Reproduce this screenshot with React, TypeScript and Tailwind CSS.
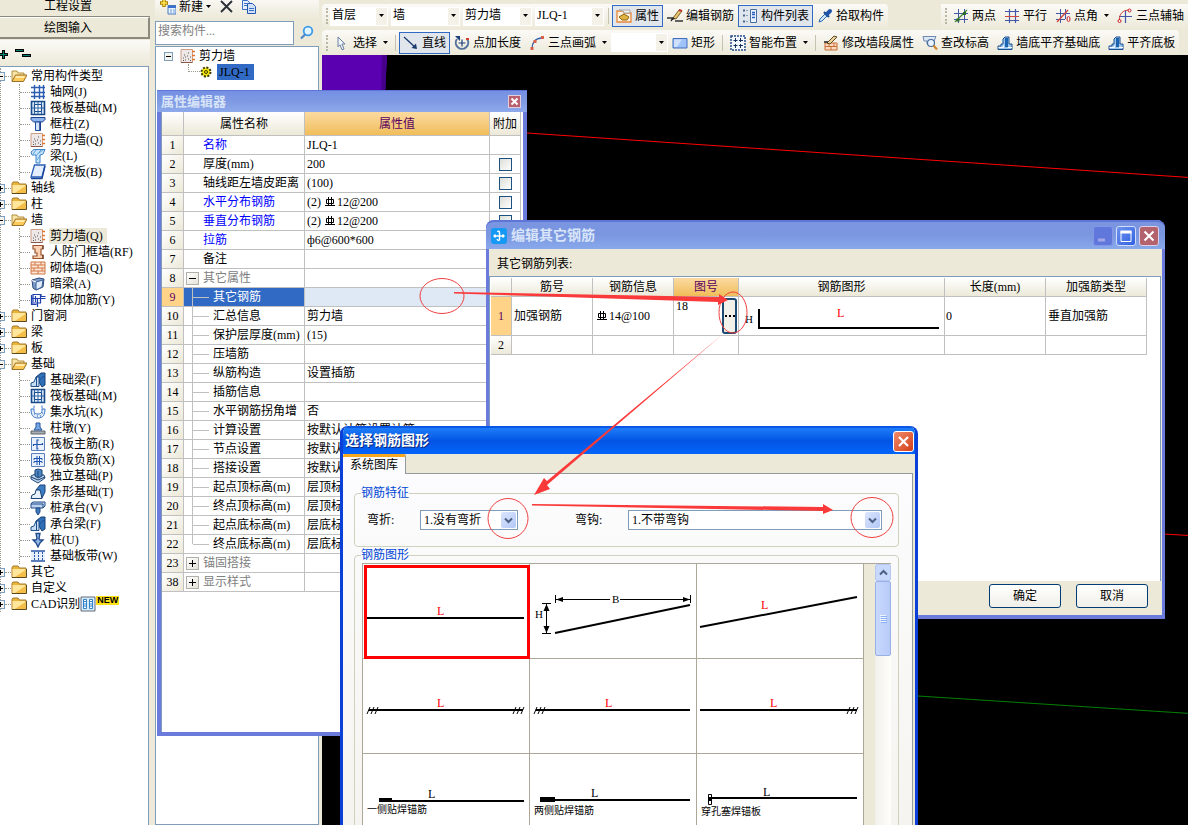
import type { ReactNode } from 'react';

/* ---------- icons ---------- */

const art: Record<string, ReactNode> = {
  folder: (
    <>
      <path d="M1 3.500 2 2h5l1.500 2H15v9.500H1z" fill="#e8b53c" stroke="#a8792a" />
      <path d="M1.500 5H14.500v8h-13z" fill="#ffe69a" />
      <path d="M4 13 14.500 6v7z" fill="#f4bd45" />
      <path d="M1 13.500h14.500V5" fill="none" stroke="#5c4a20" />
    </>
  ),
  folderOpen: (
    <>
      <path d="M1 13V3h5l1 2h6v3" fill="#f7e4a4" stroke="#b38f3f" />
      <path d="M1 13.500 4.500 7H16l-3.500 6.500z" fill="#fbc95a" stroke="#9c722a" />
      <path d="M5 8h9l-1 2H4z" fill="#ffe9a8" />
    </>
  ),
  axis: <path d="M4.500 1v14M9.500 1v14M13.500 1v14M1 3.500h14M1 8.500h14M1 12.500h14" stroke="#2c5cb0" strokeWidth="1.4" />,
  raft: (
    <>
      <path d="M1.500 1.500h13v13h-13z" fill="#dce9fa" stroke="#174a86" strokeWidth="1.600" />
      <path d="M4.500 4.500h7v7h-7z" fill="#fff" stroke="#174a86" strokeWidth="1.200" />
      <path d="M8 2v12M2 8h12M4.500 2v3M11.500 2v3M4.500 11v3M11.500 11v3" stroke="#2a64a8" />
    </>
  ),
  column: (
    <>
      <path d="M1 1.500h14v2L12.500 6h-9L1 3.500z" fill="#8db6ee" stroke="#1a3f8c" />
      <path d="M5.500 6h5v8.500h-5z" fill="#d4e4fb" stroke="#1d4ea3" />
      <path d="M10 6v8.500" stroke="#17398a" strokeWidth="1.500" />
    </>
  ),
  wall: (
    <>
      <path d="M1 1.500h11.500v13H1z" fill="#eee9e6" stroke="#cf9c86" />
      <path d="M1 14.500h11.500" stroke="#8a5a48" />
      <path d="M3 10h1M5 12h1M8 11h1M10 9h1M4 7h1M7 8h1M10 12.500h1M3 12.500h1M8 5h1M5 9h1" stroke="#555" />
      <path d="M12 3.500h3M12 7.500h3M12 11.500h3" stroke="#e2762a" strokeWidth="1.500" />
    </>
  ),
  beam: (
    <>
      <path d="M1 4 4 1.500h11L13 6l-3 1v8H6V7L2 7z" fill="#c9e4fa" stroke="#3a83c8" />
      <path d="m3 6 3-4M6 8l5-6M7 12l4-6M9 5l4-3" stroke="#5ba2dd" />
    </>
  ),
  slab: (
    <>
      <path d="M4.500 1H15l-3 12H1z" fill="#e4eefc" stroke="#2c5fb8" strokeWidth="1.300" />
      <path d="M1 14.500h11L15 2" fill="none" stroke="#17439b" strokeWidth="1.400" />
    </>
  ),
  frameWall: (
    <>
      <path d="M3 1.500h10V5h-2v6h2v3.500H3V12h4V9H5V5H3z" fill="#fbd3b4" stroke="#9a5431" strokeWidth="1.200" />
      <path d="M13 2v3M13 11v4" stroke="#4b2b1c" />
    </>
  ),
  brick: (
    <>
      <path d="M1 2h14v12H1z" fill="#fce6d6" stroke="#d07744" />
      <path d="M1 5h14M1 8h14M1 11h14M5 2v3M11 2v3M8 5v3M4 8v3M12 8v3M8 11v3" stroke="#d07744" />
    </>
  ),
  hidden: (
    <>
      <path d="M2 4 9 2l5 1-1 8-7 3-3-2z" fill="#7d9cc9" stroke="#2d4a7c" />
      <path d="m6 6 7-2-1 7-6 3z" fill="#dfeafa" stroke="#3b5e97" />
      <path d="M2 4.500 6 6" stroke="#fff" />
    </>
  ),
  tie: (
    <path d="M1.500 3v9.500h5M3 12V2.500h8v2h4.500M7.500 15V6.500h8M1 6.500h11M10.500 2v9H4M5.500 4v6" fill="none" stroke="#1f3fae" strokeWidth="1.200" />
  ),
  foundBeam: (
    <>
      <path d="M6 5 11 1h4v12l-3 2z" fill="#2f6fb7" stroke="#173f73" />
      <path d="M1 14.500V11l3-1 2-5h3v9.500z" fill="#c7ddf3" stroke="#1f4f8a" />
      <path d="M6.500 5v9M9 9l5-5" stroke="#1f4f8a" />
    </>
  ),
  pit: (
    <>
      <path d="M1 5h3c0 4 1 5 4 5s4-1 4-5h3c0 6-2 9-7 9S1 11 1 5z" fill="#e1ecfb" stroke="#3a76c6" />
      <path d="M4 1.500v3M12 1.500v3" stroke="#3a76c6" />
      <path d="M4 10h1M7 12h1M10 12h1M12 9h1" stroke="#2458a8" />
    </>
  ),
  pier: (
    <>
      <path d="M1 11h14v3H1z" fill="#a9adb5" stroke="#5d6269" />
      <path d="m4 10 2-3V3h4v4l2 3z" fill="#76a5e4" stroke="#27569f" />
    </>
  ),
  mainBar: (
    <>
      <path d="M1.500 1.500h13v13h-13z" fill="#e9f1fd" stroke="#5a80bb" />
      <path d="M3.500 10V8.500h9V7M8.500 13H7V4h2" stroke="#1f55b0" strokeWidth="1.200" />
    </>
  ),
  negBar: (
    <>
      <path d="M1.500 1.500h13v13h-13z" fill="#e9f1fd" stroke="#5a80bb" />
      <path d="M4 8V6.500h8V8M4 11V9.500h8V11M7 4v9M9.500 4v9" stroke="#1f55b0" />
    </>
  ),
  isolated: (
    <>
      <path d="M1 8 5 6l9 1 1 3-7 5-7-4z" fill="#bcd3ee" stroke="#244a7d" />
      <path d="M5 2 8 1l4 1v6L8 10 5 8z" fill="#4d86c6" stroke="#1d416f" />
      <path d="M8 3v6M1 9l7 3 7-3" stroke="#1d416f" fill="none" />
    </>
  ),
  strip: (
    <>
      <path d="M6 6 10 1h5v7l-3 6z" fill="#3c7cc3" stroke="#184277" />
      <path d="M1 14.500 2 11l3-1 1-4h4l1 4 1 4.500z" fill="#e8f1fb" stroke="#184277" />
    </>
  ),
  pileCap: (
    <>
      <path d="M1 3.500 3 2h12v4l-2 2H1z" fill="#bcd4f1" stroke="#214b85" />
      <path d="M1 4h12v4" fill="none" stroke="#214b85" />
      <path d="M6 8h4v4l-2 3-2-3z" fill="#3e79bd" stroke="#214b85" />
    </>
  ),
  pile: <path d="M6 1.500h4l-1 5 1 1.500h3l-3 3-2 4-2-4-3-3h3l1-1.500z" fill="#8fb6e6" stroke="#1f4a8c" strokeWidth="1.300" />,
  band: (
    <>
      <path d="M1 3h14v10H1z" fill="#e6effb" />
      <path d="M1 3h14M1 13h14" stroke="#2b58a6" strokeWidth="1.600" />
      <path d="M4.500 4v9M8.500 4v9M12.500 4v9" stroke="#2b58a6" strokeDasharray="2 1" />
    </>
  ),
  cad: (
    <>
      <path d="M1 1h14v14H1z" fill="#d9ebfb" stroke="#5a6d80" />
      <path d="M3.500 3.500h3v9h-3zM9.500 3.500h3v9h-3z" fill="#fff" stroke="#2e83cf" />
      <path d="M3 5.500h4M3 8h4M3 10h4M9 5.500h4M9 8h4M9 10h4" stroke="#2e83cf" />
    </>
  ),
  fresh: (
    <>
      <path d="M4 0v8M0 4h8" stroke="#a98200" strokeWidth="3.500" />
      <path d="M4 1v6M1 4h6" stroke="#ffe34d" strokeWidth="1.600" />
      <path d="M8 6.500h8v8.500H8z" fill="#e9f3ff" stroke="#4a78b8" />
      <path d="M8 8h8" stroke="#3b6fd0" strokeWidth="2" />
      <path d="M10 11h2M13 11h2M10 13h2M13 13h2" stroke="#6a9ad8" />
    </>
  ),
  remove: <path d="m2 2 11 11M13 2 2 13" stroke="#2c3038" strokeWidth="1.900" />,
  copy: (
    <>
      <path d="M1.500 1.500h5l2 2v7h-7z" fill="#e6f0ff" stroke="#3a6fc4" />
      <path d="M6.500 4.500h5l3 3v7h-8z" fill="#cfe1fd" stroke="#2257ad" />
      <path d="M3 4.500h3M3 6.500h3M8 9.500h5M8 11.500h5" stroke="#3a6fc4" />
    </>
  ),
  search: (
    <>
      <circle cx="9" cy="6" r="4.300" fill="#e2f4ff" stroke="#3d9be6" strokeWidth="1.800" />
      <path d="m6 9.500-4 4" stroke="#4a86c8" strokeWidth="2.200" />
    </>
  ),
  gear: (
    <>
      <circle cx="8" cy="8" r="4.500" fill="#f5e60a" stroke="#3c3800" strokeWidth="2" strokeDasharray="2 1.500" />
      <circle cx="8" cy="8" r="1.500" fill="none" stroke="#3c3800" />
    </>
  ),
  props: (
    <>
      <path d="M1 3h6l1 2h7v9H1z" fill="#fff3df" stroke="#e8873a" strokeWidth="1.300" />
      <path d="M3 2h11v3H8L7 3z" fill="#f0f0ee" stroke="#a9a9a9" />
      <path d="m3 9 5-3 5 3-2 3H6z" fill="#e0b243" stroke="#8b6914" />
    </>
  ),
  editBar: (
    <>
      <path d="M0 10h6l-2 3M8 13h8" fill="none" stroke="#333" strokeWidth="1.400" />
      <path d="m6 10 6-8 3 1-6 8z" fill="#e8c56b" stroke="#7b5d2a" />
      <path d="m12 2 3 1" stroke="#c03030" strokeWidth="2" />
      <path d="m5 12 1-3 2 2z" fill="#222" />
    </>
  ),
  list: (
    <>
      <path d="M8.500 1.500h6v13h-6z" fill="#eaf2ff" stroke="#4a6da0" />
      <path d="M10 4.500h3M10 6.500h3M10 9.500h3" stroke="#2d62c4" strokeWidth="1.300" />
      <path d="M1 2.500h2M1 7.500h2M1 13.500h2" stroke="#47688c" strokeWidth="2" />
      <path d="M4 2.500h2M4 7.500h2M4 13.500h2" stroke="#8aa3bf" />
    </>
  ),
  picker: (
    <>
      <path d="m2 14 1-3 6-6 2 2-6 6z" fill="#cfe6fb" stroke="#2d69ad" />
      <path d="m7 4 5 5" stroke="#1d478c" strokeWidth="2.200" />
      <path d="m10 6 3-3" stroke="#1d55a8" strokeWidth="4" strokeLinecap="round" />
    </>
  ),
  twoPoint: (
    <>
      <path d="M5.500 1v14M11.500 1v14M1 5.500h14M1 11.500h14" stroke="#4456a6" />
      <path d="M2 14 14 2" stroke="#3f8a3a" strokeWidth="1.300" />
      <path d="M3.500 10.500h3v3h-3zM10 4h3v3h-3z" fill="#2c6b2a" />
    </>
  ),
  parallel: (
    <>
      <path d="M5.500 1v14M11.500 1v14" stroke="#4456a6" strokeWidth="1.200" />
      <path d="M1 3.500h14M1 12.500h14" stroke="#4456a6" />
      <path d="M1 8.500h14" stroke="#d0463c" />
    </>
  ),
  angle: (
    <>
      <path d="M5.500 1v14M10.500 1v10M1 5.500h14M1 11.500h9" stroke="#4456a6" />
      <path d="M2 14 13 2" stroke="#d0463c" strokeWidth="1.300" />
      <ellipse cx="13.500" cy="11" rx="1.500" ry="2.500" fill="none" stroke="#d0202c" />
    </>
  ),
  threeAxis: (
    <>
      <path d="M8.500 2v13M2 8.500h13" stroke="#4456a6" strokeWidth="1.200" />
      <path d="M2.500 12C2 6 6 2 12 2" fill="none" stroke="#d0463c" />
      <circle cx="2.500" cy="13" r="1.500" fill="none" stroke="#d0202c" />
      <circle cx="12.500" cy="2.500" r="1.500" fill="none" stroke="#d0202c" />
    </>
  ),
  cursor: <path d="m4 2 7 7H8l2 5-2 .8-2-5-2 2z" fill="#f1f6fc" stroke="#6a7f9e" />,
  line: (
    <>
      <path d="m1 2 12 11" stroke="#1b3a70" strokeWidth="1.300" />
      <path d="M14 14 8.500 13l4.500-4.500z" fill="#1b3a70" />
    </>
  ),
  addLength: (
    <>
      <path d="M3 4a6.200 6.200 0 1 0 10 0" fill="none" stroke="#54729c" strokeWidth="2" />
      <path d="M8 4.500v7M4.500 8h7" stroke="#1d3f78" strokeWidth="1.200" />
      <path d="M1 1h5v5z" fill="#1d3f78" />
      <path d="M12 4h3" stroke="#d04030" strokeWidth="2" />
    </>
  ),
  arc: (
    <>
      <path d="M3 14C3 8 6 3 13 3" fill="none" stroke="#3a65ad" strokeWidth="1.500" />
      <path d="M1.500 12h3v3h-3zM4.500 5h3v3h-3zM12 1h3v3h-3z" fill="#d9604a" />
    </>
  ),
  rect: (
    <>
      <path d="M1 3.500h14v9.500H1z" fill="#9fc2f8" stroke="#3f6ec0" />
      <path d="M2 4.500h8L5 12H2z" fill="#cfe0fc" />
    </>
  ),
  smart: (
    <>
      <path d="M1 1h14v14H1z" fill="#f2f7fe" stroke="#2a4e86" strokeWidth="1.500" strokeDasharray="2 1" />
      <path d="M5.500 3v4M3.500 5.500h4M10.500 3v4M9 5.500h4M5.500 9v4M3.500 10.500h4M10.500 9v4M9 10.500h4" stroke="#17305c" />
    </>
  ),
  wallEdit: (
    <>
      <path d="M2 8h12v7H2z" fill="#fcd9c0" stroke="#c96f38" />
      <path d="M2 11.500h12M6 8v3M11 8v3M8 12v3" stroke="#c96f38" />
      <path d="m4 8 7-7 3 1-7 7z" fill="#e9d39a" stroke="#5f4b25" />
      <path d="M1 7h4" stroke="#222" strokeWidth="1.500" />
    </>
  ),
  elevation: (
    <>
      <path d="M1 1.500h13L12 6H9v3H5V6H2z" fill="#dce7f6" stroke="#7389b0" />
      <circle cx="9" cy="8" r="3.500" fill="#e8f4ff" stroke="#4a6a9a" strokeWidth="1.200" />
      <path d="m11.500 10.500 3.500 4" stroke="#cf8a34" strokeWidth="2.300" />
    </>
  ),
  align: (
    <>
      <path d="M1 11h3V9h2V4l2-2h4v7h3v5.500H1z" fill="#9cc6ee" stroke="#1a4f8f" />
      <path d="M8 3h3v9H8z" fill="#1d64b0" />
      <path d="M1.500 12.500h5v-2M11 12.500h4" stroke="#fff" />
    </>
  ),
};

function Icon({ name, className = 'size-4' }: { name: string; className?: string }) {
  return (
    <svg viewBox="0 0 16 16" fill="none" aria-hidden="true" className={`shrink-0 ${className}`}>
      {art[name]}
    </svg>
  );
}

/* ---------- left navigation ---------- */

type Group = { label: string; open?: boolean; items?: [string, string][] };

const groups: Group[] = [
  {
    label: '常用构件类型',
    open: true,
    items: [
      ['axis', '轴网(J)'],
      ['raft', '筏板基础(M)'],
      ['column', '框柱(Z)'],
      ['wall', '剪力墙(Q)'],
      ['beam', '梁(L)'],
      ['slab', '现浇板(B)'],
    ],
  },
  { label: '轴线' },
  { label: '柱' },
  {
    label: '墙',
    open: true,
    items: [
      ['wall', '剪力墙(Q)'],
      ['frameWall', '人防门框墙(RF)'],
      ['brick', '砌体墙(Q)'],
      ['hidden', '暗梁(A)'],
      ['tie', '砌体加筋(Y)'],
    ],
  },
  { label: '门窗洞' },
  { label: '梁' },
  { label: '板' },
  {
    label: '基础',
    open: true,
    items: [
      ['foundBeam', '基础梁(F)'],
      ['raft', '筏板基础(M)'],
      ['pit', '集水坑(K)'],
      ['pier', '柱墩(Y)'],
      ['mainBar', '筏板主筋(R)'],
      ['negBar', '筏板负筋(X)'],
      ['isolated', '独立基础(P)'],
      ['strip', '条形基础(T)'],
      ['pileCap', '桩承台(V)'],
      ['foundBeam', '承台梁(F)'],
      ['pile', '桩(U)'],
      ['band', '基础板带(W)'],
    ],
  },
  { label: '其它' },
  { label: '自定义' },
  { label: 'CAD识别' },
];

function Expander({ open, className = '' }: { open?: boolean; className?: string }) {
  return (
    <button aria-label={open ? '折叠' : '展开'} className={`size-[9px] shrink-0 border border-[#7b9ebd] bg-[#f4f3ee] ${className}`}>
      <svg viewBox="0 0 7 7" className="size-[7px]">
        <path d={open ? 'M1 3.500h5' : 'M1 3.500h5M3.500 1v5'} stroke="#000" />
      </svg>
    </button>
  );
}

function Sidebar() {
  return (
    <aside className="flex w-[150px] shrink-0 flex-col bg-[#ece9d8]">
      <button className="h-[17px] border-b border-[#8c8a7c] pr-[14px] pb-1 leading-3">工程设置</button>
      <button className="h-[22px] border-t border-r-2 border-b-2 border-t-white border-r-[#8c8a7c] border-b-[#8c8a7c] pr-3 leading-4">
        绘图输入
      </button>
      <div className="mt-px flex h-[26px] items-center bg-linear-to-b from-[#fbfaf7] to-[#ece9d8]">
        <button aria-label="全部展开">
          <svg viewBox="0 0 8 12" className="h-3 w-2">
            <path d="M-2 7.500h10M3.500 3v9" stroke="#000" strokeWidth="3" />
            <path d="M-2 7.500h9M3.500 4v7" stroke="#008070" />
          </svg>
        </button>
        <button aria-label="全部折叠" className="ml-[7px]">
          <svg viewBox="0 0 16 12" className="h-3 w-4">
            <path d="M0 3.500h9M7 8.500h9" stroke="#000" strokeWidth="3" />
            <path d="M1 3.500h7M8 8.500h7" stroke="#008070" />
          </svg>
        </button>
      </div>
      <nav className="mr-px grow overflow-hidden border-t border-r border-[#7f9db9] bg-white pt-px">
        <ul className="border-l border-dotted border-[#9a9a8c]">
          {groups.map((group, g) => (
            <li key={group.label}>
              <div className="flex h-4 items-center">
                <Expander open={group.open} className="-ml-[5px]" />
                <span className="w-[6px] border-t border-dotted border-[#9a9a8c]" />
                <Icon name={group.open ? 'folderOpen' : 'folder'} />
                <span className="ml-1">{group.label}</span>
                {group.label === 'CAD识别' && (
                  <>
                    <Icon name="cad" className="size-4" />
                    <span className="-mt-2 bg-[#ffe11a] px-px font-['Liberation_Sans'] text-[9px] leading-[9px] font-bold">
                      NEW
                    </span>
                  </>
                )}
              </div>
              {group.items && (
                <ul className="ml-[18px] border-l border-dotted border-[#9a9a8c]">
                  {group.items.map(([icon, label], i) => (
                    <li key={label} className="flex h-4 items-center">
                      <span className="w-[10px] border-t border-dotted border-[#9a9a8c]" />
                      <Icon name={icon} />
                      <a href="#" className={`ml-[3px] pr-1 pl-px whitespace-nowrap ${g === 3 && i === 0 ? 'bg-[#ece9d8]' : ''}`}>
                        {label}
                      </a>
                    </li>
                  ))}
                </ul>
              )}
            </li>
          ))}
        </ul>
      </nav>
    </aside>
  );
}

function ComponentPanel() {
  return (
    <section className="ml-[5px] flex w-[167px] shrink-0 flex-col bg-[#ece9d8] pr-[3px]">
      <div className="flex h-5 items-center bg-linear-to-b from-[#f8f7f2] to-[#ece9d8] pb-[6px] pl-[5px]">
        <Icon name="fresh" />
        <button className="ml-[3px] flex items-center">
          新建
          <Caret />
        </button>
        <button aria-label="删除" className="ml-2">
          <Icon name="remove" />
        </button>
        <button aria-label="复制" className="ml-[6px]">
          <Icon name="copy" />
        </button>
      </div>
      <div className="flex h-[26px] items-center">
        <input
          aria-label="搜索构件"
          placeholder="搜索构件..."
          className="h-6 min-w-0 grow border border-[#7f9db9] bg-white px-[2px] pb-1 placeholder:text-[#808080]"
        />
        <button aria-label="搜索" className="flex w-[25px] shrink-0 justify-center">
          <Icon name="search" />
        </button>
      </div>
      <div className="grow border border-[#7f9db9] bg-white pt-px pl-2">
        <div className="flex h-4 items-center">
          <Expander open />
          <Icon name="wall" className="ml-[7px] size-4" />
          <span className="ml-[3px]">剪力墙</span>
        </div>
        <div className="ml-6 flex h-4 items-center">
          <span className="-mt-2 h-2 w-3 border-b border-l border-dotted border-[#9a9a8c]" />
          <Icon name="gear" className="-ml-[2px] size-4" />
          <span className="ml-[3px] bg-[#316ac5] pr-1 pl-[2px] leading-4">JLQ-1</span>
        </div>
      </div>
    </section>
  );
}

/* ---------- top toolbars ---------- */

function Caret() {
  return (
    <svg viewBox="0 0 8 4" className="h-1 w-2 shrink-0" aria-hidden="true">
      <path d="M3 0h5L5.500 3z" />
    </svg>
  );
}

function Tool({ icon, label, active, caret }: { icon: string; label: string; active?: boolean; caret?: boolean }) {
  return (
    <button
      className={`flex h-[22px] shrink-0 items-center gap-[3px] border px-[3px] whitespace-nowrap ${
        active ? 'border-[#316ac5] bg-[#e1e6ec]' : 'border-transparent'
      }`}
    >
      <Icon name={icon} />
      {label}
      {caret && <Caret />}
    </button>
  );
}

function Combo({ value, label, className }: { value: string; label: string; className: string }) {
  return (
    <div className={`relative h-[19px] shrink-0 bg-white ${className}`}>
      <select aria-label={label} className="size-full appearance-none pb-[2px] pl-[2px] leading-4">
        <option>{value}</option>
      </select>
      <span className="pointer-events-none absolute inset-y-px right-px flex w-[11px] items-center bg-[#f3f1e8]">
        <Caret />
      </span>
    </div>
  );
}

function Grip() {
  return <span className="mr-[2px] ml-1 h-4 w-0 shrink-0 border-l-2 border-dotted border-[#b9b6a5]" />;
}

function Divider() {
  return <span className="mx-[3px] h-4 w-px shrink-0 bg-[#c5c2b0]" />;
}

function Toolbars() {
  return (
    <header className="shrink-0 overflow-hidden bg-[#ece9d8] pt-1">
      <div className="flex h-[26px]">
        <div className="flex shrink-0 items-center rounded-sm bg-linear-to-b from-[#fbfaf7] to-[#ece9d8] pb-[2px]">
          <Grip />
          <div className="flex gap-[3px] pr-px">
            <Combo label="楼层" value="首层" className="w-[58px]" />
            <Combo label="构件分类" value="墙" className="w-[69px]" />
            <Combo label="构件类型" value="剪力墙" className="w-[69px]" />
            <Combo label="构件" value="JLQ-1" className="w-[69px]" />
          </div>
          <Divider />
          <Tool icon="props" label="属性" active />
          <Tool icon="editBar" label="编辑钢筋" />
          <Tool icon="list" label="构件列表" active />
          <Tool icon="picker" label="拾取构件" />
        </div>
        <div className="ml-[53px] flex grow items-center bg-linear-to-b from-[#fbfaf7] to-[#ece9d8] pb-[2px]">
          <Grip />
          <Tool icon="twoPoint" label="两点" />
          <Tool icon="parallel" label="平行" />
          <Tool icon="angle" label="点角" caret />
          <Tool icon="threeAxis" label="三点辅轴" />
        </div>
      </div>
      <div className="flex h-[25px]">
        <div className="flex shrink-0 items-center rounded-sm bg-linear-to-b from-[#fbfaf7] to-[#ece9d8]">
          <Grip />
          <Tool icon="cursor" label="选择" caret />
          <Divider />
          <Tool icon="line" label="直线" active />
          <Tool icon="addLength" label="点加长度" />
          <Tool icon="arc" label="三点画弧" caret />
          <Combo label="画弧方式" value="" className="w-[57px]" />
          <Tool icon="rect" label="矩形" />
          <Divider />
          <Tool icon="smart" label="智能布置" caret />
          <Divider />
          <Tool icon="wallEdit" label="修改墙段属性" />
          <Tool icon="elevation" label="查改标高" />
          <Tool icon="align" label="墙底平齐基础底" />
          <Tool icon="align" label="平齐底板" />
        </div>
      </div>
    </header>
  );
}

/* ---------- property editor ---------- */

// HRB400 grade mark, not available as a character in common fonts
function Rebar() {
  return (
    <svg viewBox="0 0 12 12" className="mr-px inline-block size-3 align-[-2px]" fill="none" stroke="#000">
      <path d="M2.500 3.500h7v4h-7zM4.500 1v9M7.500 1v9M1 9.500h10" />
    </svg>
  );
}

type Prop = { no: number; name: string; value?: ReactNode; kind?: 'link' | 'group' | 'child'; check?: boolean; open?: boolean };

const props: Prop[] = [
  { no: 1, name: '名称', value: 'JLQ-1', kind: 'link' },
  { no: 2, name: '厚度(mm)', value: '200', check: true },
  { no: 3, name: '轴线距左墙皮距离', value: '(100)', check: true },
  { no: 4, name: '水平分布钢筋', value: <>(2) <Rebar />12@200</>, kind: 'link', check: true },
  { no: 5, name: '垂直分布钢筋', value: <>(2) <Rebar />12@200</>, kind: 'link', check: true },
  { no: 6, name: '拉筋', value: 'ф6@600*600', kind: 'link', check: true },
  { no: 7, name: '备注', check: true },
  { no: 8, name: '其它属性', kind: 'group', open: true },
  { no: 9, name: '其它钢筋', kind: 'child' },
  { no: 10, name: '汇总信息', value: '剪力墙', kind: 'child' },
  { no: 11, name: '保护层厚度(mm)', value: '(15)', kind: 'child' },
  { no: 12, name: '压墙筋', kind: 'child' },
  { no: 13, name: '纵筋构造', value: '设置插筋', kind: 'child' },
  { no: 14, name: '插筋信息', kind: 'child' },
  { no: 15, name: '水平钢筋拐角增', value: '否', kind: 'child' },
  { no: 16, name: '计算设置', value: '按默认计算设置计算', kind: 'child' },
  { no: 17, name: '节点设置', value: '按默认', kind: 'child' },
  { no: 18, name: '搭接设置', value: '按默认', kind: 'child' },
  { no: 19, name: '起点顶标高(m)', value: '层顶标', kind: 'child' },
  { no: 20, name: '终点顶标高(m)', value: '层顶标', kind: 'child' },
  { no: 21, name: '起点底标高(m)', value: '层底标', kind: 'child' },
  { no: 22, name: '终点底标高(m)', value: '层底标', kind: 'child' },
  { no: 23, name: '锚固搭接', kind: 'group' },
  { no: 38, name: '显示样式', kind: 'group' },
];

const headCell = 'border-r border-b border-[#c0c0c0] bg-linear-to-b from-white to-[#ece9d8] p-0 font-normal';
const activeHead = 'border-r border-b border-[#c0c0c0] bg-linear-to-b from-[#fbdaa0] to-[#f0bd58] p-0 font-normal text-[#5b0060]';
const cell = 'border-r border-b border-[#c0c0c0] p-0 whitespace-nowrap overflow-hidden';

function PropName({ row }: { row: Prop }) {
  if (row.kind === 'child') {
    return (
      <div className="ml-2 flex h-[18px] items-center">
        <span className={`w-px self-start bg-[#c0c0c0] ${row.no === 22 ? 'h-[9px]' : 'h-[18px]'}`} />
        <span className="mr-1 h-px w-4 bg-[#c0c0c0]" />
        {row.name}
      </div>
    );
  }
  if (row.kind === 'group') {
    return (
      <div className="flex items-center pl-[2px] text-[#808080]">
        <button
          aria-label={row.open ? '折叠' : '展开'}
          className="mr-[4px] size-[13px] border border-[#b0b0a8] bg-linear-to-br from-white to-[#e4e2d8]"
        >
          <svg viewBox="0 0 11 11" className="size-[11px]">
            <path d={row.open ? 'M2 5.500h7' : 'M2 5.500h7M5.500 2v7'} stroke="#000" />
          </svg>
        </button>
        {row.name}
      </div>
    );
  }
  return <div className={`pl-[19px] ${row.kind === 'link' ? 'text-[#0000ff]' : ''}`}>{row.name}</div>;
}

function PropertyEditor() {
  return (
    <section className="absolute top-[90px] left-[157px] z-10 flex h-[646px] w-[370px] flex-col border-x-4 border-b-4 border-[#6a7bdc] bg-white">
      <div className="-mx-1 flex h-[22px] shrink-0 items-center justify-between border-t border-[#5c75d6] bg-linear-to-b from-[#7590e4] via-[#7f9ae2] to-[#8eaaec] pr-[6px] pl-1">
        <h2 className="text-[13px] font-bold text-[#d8e4f8]">属性编辑器</h2>
        <button aria-label="关闭" className="flex size-[13px] items-center justify-center border border-[#e2cddd] bg-[#b8606e]">
          <svg viewBox="0 0 9 9" className="size-[9px]">
            <path d="m1.500 1.500 6 6M7.500 1.500l-6 6" stroke="#fff" strokeWidth="2" />
          </svg>
        </button>
      </div>
      <div className="grow overflow-hidden border-l border-[#7f9db9]">
        <table className="w-[359px] table-fixed border-separate border-spacing-0">
          <thead>
            <tr className="h-6">
              <th className={`w-[22px] ${headCell}`} />
              <th className={`w-[121px] ${headCell}`}>属性名称</th>
              <th className={`w-[185px] ${activeHead}`}>属性值</th>
              <th className={`w-[31px] ${headCell}`}>附加</th>
            </tr>
          </thead>
          <tbody>
            {props.map((row) => {
              const picked = row.no === 9;
              return (
                <tr key={row.no} className="h-[19px]">
                  <th
                    className={`border-r border-b border-[#c0c0c0] p-0 font-normal ${
                      picked ? 'bg-[#ffd488] text-[#5b0060]' : 'bg-linear-to-br from-white to-[#ece9d8]'
                    }`}
                  >
                    {row.no}
                  </th>
                  <td className={`${cell} ${picked ? 'bg-[#316ac5] text-white' : ''}`}>
                    <PropName row={row} />
                  </td>
                  <td className={`${cell} pl-[2px] ${picked ? 'bg-[#dfe9f5]' : ''}`}>{row.value}</td>
                  <td className={cell}>
                    {row.check && (
                      <input
                        type="checkbox"
                        aria-label={`${row.name}附加`}
                        className="mx-auto block size-[13px] appearance-none border border-[#1c5180] bg-linear-to-br from-[#dcdcd7] to-white"
                      />
                    )}
                  </td>
                </tr>
              );
            })}
          </tbody>
        </table>
      </div>
    </section>
  );
}

/* ---------- extra rebar dialog ---------- */

function RebarDialog() {
  return (
    <section className="absolute top-[220px] left-[486px] z-20 flex h-[399px] w-[679px] flex-col rounded-t-lg border-x-3 border-b-4 border-[#6a7bdc] bg-[#ece9d8]">
      <div className="-mx-[3px] flex h-[29px] shrink-0 items-center rounded-t-lg border-t-2 border-[#5c75d6] bg-linear-to-b from-[#7b95e0] via-[#7b97e0] to-[#89a9ec] px-[5px]">
        <svg viewBox="0 0 16 16" className="size-4" fill="none">
          <rect width="16" height="16" rx="3" fill="#1599f5" />
          <path d="M8.500 12V4.500C8.500 3 7 3 6.500 4M3 8h10M4.500 6.500 3 8l1.500 1.500M11.500 6.500 13 8l-1.500 1.500M8.500 12c-1 1-2 0-2.500-1" stroke="#fff" strokeWidth="1.400" />
        </svg>
        <h2 className="ml-1 grow text-[14px] font-bold text-[#d8e4f8]">编辑其它钢筋</h2>
        <div className="flex gap-[3px] pr-px">
          <button aria-label="最小化" className="size-5 rounded-[3px] border border-[#8397e6] bg-[#6078dc]">
            <svg viewBox="0 0 18 18">
              <path d="M4 13h7" stroke="#a2a6ea" strokeWidth="3" />
            </svg>
          </button>
          <button aria-label="最大化" className="size-5 rounded-[3px] border border-[#d3defa] bg-linear-to-br from-[#6f93ee] to-[#2f5fe0]">
            <svg viewBox="0 0 18 18" fill="none">
              <path d="M4 4.500h10v10H4z" stroke="#fff" />
              <path d="M3.500 5h11" stroke="#fff" strokeWidth="3" />
            </svg>
          </button>
          <button aria-label="关闭" className="size-5 rounded-[3px] border border-[#dcd0e6] bg-[#b4626e]">
            <svg viewBox="0 0 18 18">
              <path d="m4.500 4.500 9 9M13.500 4.500l-9 9" stroke="#fff" strokeWidth="2" />
            </svg>
          </button>
        </div>
      </div>
      <p className="flex h-[27px] shrink-0 items-center pt-[2px] pl-2">其它钢筋列表:</p>
      <div className="mr-px grow border-t border-r border-l border-[#7f9db9] bg-white pt-px pl-px">
        <table className="w-[656px] table-fixed border-separate border-spacing-0">
          <thead>
            <tr className="h-[19px]">
              <th className={`w-[21px] ${headCell}`} />
              <th className={`w-[81px] ${headCell}`}>筋号</th>
              <th className={`w-[81px] ${headCell}`}>钢筋信息</th>
              <th className={`w-[65px] ${activeHead}`}>图号</th>
              <th className={`w-[206px] ${headCell}`}>钢筋图形</th>
              <th className={`w-[101px] ${headCell}`}>长度(mm)</th>
              <th className={`w-[101px] ${headCell}`}>加强筋类型</th>
            </tr>
          </thead>
          <tbody>
            <tr className="h-[39px]">
              <th className="border-r border-b border-[#c0c0c0] bg-[#ffd488] p-0 font-normal text-[#5b0060]">1</th>
              <td className={`${cell} pl-[2px]`}>加强钢筋</td>
              <td className={`${cell} pl-[3px]`}>
                <Rebar />
                14@100
              </td>
              <td className={`${cell} pl-[2px]`}>
                <div className="flex h-[38px] justify-between pt-px pr-px">
                  18
                  <button
                    aria-label="选择图号"
                    className="flex h-9 w-[15px] items-center justify-center rounded-[3px] border-2 border-[#1d4a70] bg-[#f1f0e9]"
                  >
                    <svg viewBox="0 0 10 2" className="h-[2px] w-[10px]">
                      <path d="M0 0h2v2H0zM4 0h2v2H4zM8 0h2v2H8z" />
                    </svg>
                  </button>
                </div>
              </td>
              <td className={cell}>
                <svg viewBox="0 0 205 38" className="h-[38px] w-[205px]" aria-label="钢筋图形">
                  <path d="M20 12v19M19 31h181" fill="none" stroke="#000" strokeWidth="2" />
                  <text x="6" y="26" fontSize="11">H</text>
                  <text x="98" y="20" fontSize="12" fill="#f00">L</text>
                </svg>
              </td>
              <td className={`${cell} pl-px`}>0</td>
              <td className={`${cell} pl-[2px]`}>垂直加强筋</td>
            </tr>
            <tr className="h-[19px]">
              <th className={headCell}>2</th>
              <td className={cell} />
              <td className={cell} />
              <td className={cell} />
              <td className={cell} />
              <td className={cell} />
              <td className={cell} />
            </tr>
          </tbody>
        </table>
      </div>
      <div className="flex h-[34px] shrink-0 justify-end gap-[15px] pt-[3px] pr-[14px]">
        <button className="h-6 w-[72px] rounded-[3px] border border-[#003c74] bg-linear-to-b from-white to-[#f0efe8]">确定</button>
        <button className="h-6 w-[72px] rounded-[3px] border border-[#003c74] bg-linear-to-b from-white to-[#f0efe8]">取消</button>
      </div>
    </section>
  );
}

/* ---------- shape picker ---------- */

const hatch = (x: number) => `M${x} 55l3-7M${x + 4} 55l3-7M${x + 8} 55l3-7`;

const shapes: { name: string; drawing: ReactNode }[] = [
  {
    name: '直筋',
    drawing: (
      <>
        <path d="M5 54h157" strokeWidth="2" />
        <text x="75" y="51" fill="#f00" stroke="none">L</text>
      </>
    ),
  },
  {
    name: '斜筋带尺寸',
    drawing: (
      <>
        <path d="M26 69 161 41" strokeWidth="2" />
        <path d="M26.500 35.500H81M91 35.500h70M26.500 31v8M161.500 31v8M17.500 39v30M13 39.500h9M13 69.500h9" />
        <path d="m27 35.500 7-2.500v5zM161 35.500l-7-2.500v5zM17.500 40l-3 7h6zM17.500 69l-3-7h6z" fill="#000" stroke="none" />
        <text x="83" y="39" fontSize="11" stroke="none">B</text>
        <text x="6" y="54" fontSize="11" stroke="none">H</text>
      </>
    ),
  },
  {
    name: '斜筋',
    drawing: (
      <>
        <path d="M4 63 161 33" strokeWidth="2" />
        <text x="65" y="45" fill="#f00" stroke="none">L</text>
      </>
    ),
  },
  {
    name: '两端锚固',
    drawing: (
      <>
        <path d="M7 51h154" strokeWidth="2" />
        <path d={hatch(5) + hatch(151)} />
        <text x="75" y="48" fill="#f00" stroke="none">L</text>
      </>
    ),
  },
  {
    name: '左端锚固',
    drawing: (
      <>
        <path d="M7 51h154" strokeWidth="2" />
        <path d={hatch(5)} />
        <text x="76" y="48" fill="#f00" stroke="none">L</text>
      </>
    ),
  },
  {
    name: '右端锚固',
    drawing: (
      <>
        <path d="M4 51h157" strokeWidth="2" />
        <path d={hatch(151)} />
        <text x="74" y="48" fill="#f00" stroke="none">L</text>
      </>
    ),
  },
  {
    name: '一侧贴焊',
    drawing: (
      <>
        <path d="M17 47h145" strokeWidth="2" />
        <path d="M17 45.500h13" strokeWidth="3" />
        <text x="66" y="44" stroke="none">L</text>
        <text x="5" y="59" fontSize="10" stroke="none">一侧贴焊锚筋</text>
      </>
    ),
  },
  {
    name: '两侧贴焊',
    drawing: (
      <>
        <path d="M11 46h150" strokeWidth="2" />
        <path d="M11 45.500h15" strokeWidth="5" />
        <text x="62" y="43" stroke="none">L</text>
        <text x="5" y="60" fontSize="10" stroke="none">两侧贴焊锚筋</text>
      </>
    ),
  },
  {
    name: '穿孔塞焊',
    drawing: (
      <>
        <path d="M13 44h148" strokeWidth="2" />
        <path d="M12.500 40.500h3v10h-3z" fill="none" />
        <path d="M14 43v4" strokeWidth="3" />
        <text x="67" y="42" stroke="none">L</text>
        <text x="5" y="61" fontSize="10" stroke="none">穿孔塞焊锚板</text>
      </>
    ),
  },
];

function XpSelect({ id, value, className }: { id: string; value: string; className: string }) {
  return (
    <div className={`relative h-5 border border-[#7f9db9] bg-white ${className}`}>
      <select id={id} className="size-full appearance-none pl-[3px] leading-4">
        <option>{value}</option>
      </select>
      <span className="pointer-events-none absolute inset-y-px right-px flex w-[15px] items-center justify-center rounded-xs bg-linear-to-br from-[#dbe5fe] to-[#b3c8f6]">
        <svg viewBox="0 0 9 7" className="h-[7px] w-[9px]" fill="none">
          <path d="m1 1.500 3.500 3.500L8 1.500" stroke="#4d6185" strokeWidth="2" />
        </svg>
      </span>
    </div>
  );
}

function ShapeDialog() {
  return (
    <section className="absolute top-[426px] bottom-0 left-[340px] z-30 flex w-[578px] flex-col overflow-hidden rounded-t-lg border-x-3 border-[#0a3fd8] bg-[#ece9d8]">
      <div className="-mx-[3px] flex h-7 shrink-0 items-center justify-between border-t-2 border-[#0a56e6] bg-linear-to-b from-[#1f7df8] via-[#0453e4] to-[#0466fb] pr-1 pl-[5px]">
        <h2 className="text-[14px] font-bold text-white [text-shadow:1px_1px_#0a2a80]">选择钢筋图形</h2>
        <button aria-label="关闭" className="size-[21px] rounded-[3px] border border-white bg-linear-to-br from-[#ef8a68] to-[#d43c12]">
          <svg viewBox="0 0 19 19">
            <path d="m5 5 9 9M14 5l-9 9" stroke="#fff" strokeWidth="2.200" />
          </svg>
        </button>
      </div>
      <div className="z-10 -mb-px flex h-5 shrink-0">
        <button className="w-[63px] rounded-t-xs border-t-3 border-r border-t-[#f7a81f] border-r-[#919b9c] bg-[#fcfcfe] pb-[3px] leading-4">
          系统图库
        </button>
      </div>
      <div className="mr-[2px] grow border-t border-r border-[#919b9c] bg-linear-to-b from-[#fcfcfe] to-[#f4f3ee] pt-[11px] pr-[13px] pl-[11px]">
        <fieldset className="h-[62px] rounded border border-[#d0d0bf]">
          <legend className="ml-[6px] leading-4 text-[#0046d5]">钢筋特征</legend>
          <div className="flex items-center pt-[9px] pr-4 pl-3">
            <label htmlFor="bend" className="w-[53px]">弯折:</label>
            <XpSelect id="bend" value="1.没有弯折" className="w-[98px]" />
            <label htmlFor="hook" className="ml-[57px] w-[53px]">弯钩:</label>
            <XpSelect id="hook" value="1.不带弯钩" className="grow" />
          </div>
        </fieldset>
        <fieldset className="h-[320px] rounded border border-[#d0d0bf]">
          <legend className="ml-[6px] leading-4 text-[#0046d5]">钢筋图形</legend>
          <div className="mx-[7px] flex border-t border-l border-[#aca899] bg-[#ece9d8]">
            <div className="grid grid-cols-[repeat(3,167px)] bg-white">
              {shapes.map((shape, i) => (
                <button
                  key={shape.name}
                  aria-label={shape.name}
                  className="relative h-[95px] border-r border-b border-[#aca899]"
                >
                  <svg viewBox="1 0 166 94" className="h-[94px] w-[166px]" fontSize="12" stroke="#000">
                    {shape.drawing}
                  </svg>
                  {i === 0 && <span className="absolute inset-px -right-px -bottom-px border-3 border-[#ff0000]" />}
                </button>
              ))}
            </div>
            <div className="ml-[11px] grow bg-linear-to-r from-[#f3f1ec] to-[#fefefb]">
              <button
                aria-label="向上滚动"
                className="flex h-[17px] w-full items-center justify-center rounded-xs border border-[#b6c8f2] bg-[#c8d8fd]"
              >
                <svg viewBox="0 0 9 7" className="h-[7px] w-[9px]" fill="none">
                  <path d="m1 5.500 3.500-3.500L8 5.500" stroke="#4d6185" strokeWidth="2" />
                </svg>
              </button>
              <div className="flex h-[75px] items-center justify-center rounded-xs border border-[#98b0e4] bg-linear-to-r from-[#c8d7fd] to-[#b8ccf8]">
                <svg viewBox="0 0 7 8" className="h-2 w-[7px]">
                  <path d="M0 .5h6M0 2.500h6M0 4.500h6M0 6.500h6" stroke="#eef4fe" />
                  <path d="M1 1.500h6M1 3.500h6M1 5.500h6M1 7.500h6" stroke="#8cb0f8" />
                </svg>
              </div>
            </div>
          </div>
        </fieldset>
      </div>
    </section>
  );
}

/* ---------- guide arrows drawn over the windows ---------- */

function Guides() {
  return (
    <svg className="pointer-events-none absolute inset-0 z-40 size-full" aria-hidden="true">
      <g fill="none" stroke="#f04040">
        <ellipse cx="442" cy="296" rx="22" ry="17.500" />
        <ellipse cx="733" cy="312.500" rx="14" ry="20.500" />
        <circle cx="508" cy="518.500" r="20" />
        <ellipse cx="872" cy="517.500" rx="21" ry="20" />
      </g>
      <g fill="#fa3a3a">
        <path d="M454 292v1.500l264 8.500v3l10-5-9-6v3z" />
        <path d="m723 334-176 147-3-3-10 17 16-6-3-4z" />
        <path d="M532 504v1.500l291 5.500v3l10-4-10-6v3z" />
      </g>
    </svg>
  );
}

export default function App() {
  return (
    <div className="relative flex h-screen overflow-hidden bg-[#ece9d8] font-['Liberation_Serif','Noto_Sans_CJK_SC',sans-serif] text-[12px] leading-4 text-black">
      <Sidebar />
      <ComponentPanel />
      <main className="flex min-w-0 grow flex-col">
        <Toolbars />
        <svg className="min-h-0 w-full grow bg-black" aria-label="绘图区">
          <path d="M0 0h65l-2 40H0z" fill="#5a00b0" />
          <path d="M60 0h5l-2 40h-4z" fill="#47008c" />
          <path d="m205 78 670 45M842 479l33 2" stroke="#f00" />
          <path d="m596 641 280 18" stroke="#008000" />
        </svg>
      </main>
      <PropertyEditor />
      <RebarDialog />
      <ShapeDialog />
      <Guides />
    </div>
  );
}
